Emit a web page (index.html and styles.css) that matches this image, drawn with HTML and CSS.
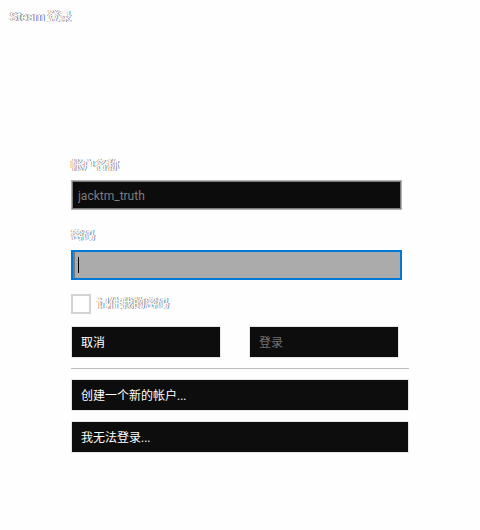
FILE: index.html
```html
<!DOCTYPE html>
<html lang="zh-CN">
<head>
<meta charset="utf-8">
<meta name="viewport" content="width=device-width, initial-scale=1">
<title>Steam 登录</title>
<link rel="stylesheet" href="styles.css">
</head>
<body>
<header class="titlebar"><h1 class="title faint">Steam 登录</h1></header>
<main>
<form class="login">
  <div class="field">
    <label class="faint" for="account">帐户名称</label>
    <input class="input" id="account" type="text" value="jacktm_truth">
  </div>
  <div class="field">
    <label class="faint" for="password">密码</label>
    <div class="entry">
      <input class="input input-active" id="password" type="password">
      <span class="caret"></span>
    </div>
  </div>
  <div class="remember">
    <input class="check" id="remember" type="checkbox">
    <label class="faint" for="remember">记住我的密码</label>
  </div>
  <div class="actions">
    <button class="button" type="button">取消</button>
    <button class="button" type="submit" disabled>登录</button>
  </div>
  <hr class="rule">
  <div class="links">
    <button class="button" type="button">创建一个新的帐户...</button>
    <button class="button" type="button">我无法登录...</button>
  </div>
</form>
</main>
</body>
</html>
```
FILE: styles.css
```css
* {
  box-sizing: border-box;
}

body {
  margin: 0;
  background: #fefefe;
  color: #fff;
  font: 12px/16px Roboto, "Noto Sans CJK SC", sans-serif;
}

input,
button {
  margin: 0;
  font: inherit;
}

.titlebar {
  padding: 9px 10px 7px;
}

.title {
  margin: 0;
  font: inherit;
}

/* White lettering with warm and cool edges */
.faint {
  color: #fefefe;
  text-shadow: -1px 0 #cfa070, 1px 0 #4f88c4;
}

.login {
  margin: 126px 71px 0;
}

.field {
  margin: 0 7px 18px 0;
}

.field label {
  display: block;
  margin-bottom: 6px;
}

.entry {
  position: relative;
}

.input {
  display: block;
  width: 100%;
  height: 30px;
  padding: 2px 6px 0;
  border: 1px solid #b4b4b4;
  border-radius: 0;
  outline: 1px solid #7a7a7a;
  outline-offset: -2px;
  background: #0c0c0c;
  color: #7d7d7d;
}

.input-active {
  border: 2px solid #0078d7;
  outline: none;
  background: #ababab;
  box-shadow: inset 2px 0 #787878;
  color: #000;
}

.caret {
  position: absolute;
  left: 7px;
  top: 7px;
  width: 1px;
  height: 16px;
  background: #000;
}

.remember {
  display: flex;
  align-items: center;
  gap: 6px;
  margin-top: -4px;
}

.check {
  appearance: none;
  width: 20px;
  height: 20px;
  border: 2px solid #d3d3d3;
  background: #fff;
}

.actions {
  display: grid;
  grid-template-columns: 1fr 1fr;
  gap: 28px;
  margin: 12px 10px 10px 0;
}

.button {
  display: block;
  width: 100%;
  height: 32px;
  padding: 2px 9px 0;
  border: 1px solid #e6e6e6;
  border-radius: 0;
  background: #0d0d0d;
  color: #fff;
  text-align: left;
}

.button:disabled {
  color: #737373;
}

.rule {
  height: 1px;
  margin: 0 0 10px;
  border: 0;
  background: #bdbdbd;
}

.links {
  display: grid;
  gap: 10px;
}
```
